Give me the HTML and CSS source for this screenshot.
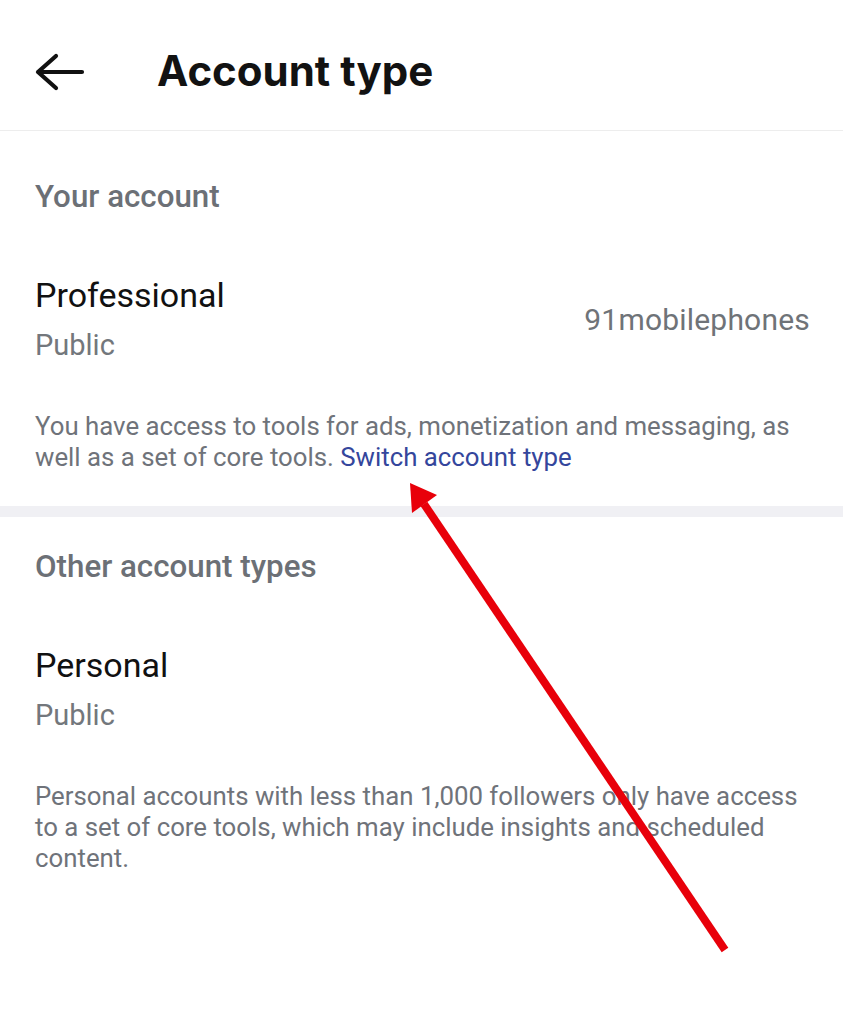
FILE: index.html
```html
<!DOCTYPE html>
<html>
<head>
<meta charset="utf-8">
<link rel="stylesheet" href="styles.css">
</head>
<body>
<div class="page">
  <header class="topbar">
    <svg class="back" width="50" height="40" viewBox="0 0 50 40">
      <path d="M47 20 H3 M21 4 L3 20 L21 36" fill="none" stroke="#111" stroke-width="4.2" stroke-linecap="round" stroke-linejoin="round"/>
    </svg>
    <h1 class="title">Account type</h1>
  </header>

  <section class="section">
    <div class="section-label">Your account</div>
    <div class="row">
      <div class="row-text">
        <div class="row-title">Professional</div>
        <div class="row-sub">Public</div>
      </div>
      <div class="username">91mobilephones</div>
    </div>
    <p class="desc">You have access to tools for ads, monetization and messaging, as well as a set of core tools. <span class="link">Switch account type</span></p>
  </section>

  <div class="gap"></div>

  <section class="section second">
    <div class="section-label">Other account types</div>
    <div class="row">
      <div class="row-text">
        <div class="row-title">Personal</div>
        <div class="row-sub">Public</div>
      </div>
    </div>
    <p class="desc">Personal accounts with less than 1,000 followers only have access to a set of core tools, which may include insights and scheduled content.</p>
  </section>

  <svg class="annot" width="843" height="1024" viewBox="0 0 843 1024">
    <line x1="424" y1="504" x2="725" y2="950" stroke="#e8000a" stroke-width="8" stroke-linecap="butt"/>
    <polygon points="410,483 412,513 437,495" fill="#e8000a"/>
  </svg>
</div>
</body>
</html>
```

FILE: styles.css
```css
html, body {
  margin: 0;
  padding: 0;
  background: #fff;
}
.page {
  position: relative;
  width: 843px;
  height: 1024px;
  overflow: hidden;
  font-family: Roboto, "Liberation Sans", sans-serif;
}
.topbar {
  height: 131px;
  display: flex;
  align-items: center;
  padding: 11px 0 0 35px;
  border-bottom: 1px solid #ededed;
  box-sizing: border-box;
}
.back {
  display: block;
  margin-top: 3px;
  flex: none;
}
.title {
  margin: 0 0 0 72px;
  font-family: Inter, "Liberation Sans", sans-serif;
  font-weight: 700;
  font-size: 42px;
  line-height: 51px;
  color: #121212;
}
.section {
  padding: 0 33px 0 35px;
}
.section-label {
  padding-top: 48px;
  font-size: 31.3px;
  font-weight: 500;
  color: #6c7076;
  line-height: 36px;
}
.second .section-label {
  padding-top: 32px;
}
.row {
  display: flex;
  align-items: center;
  justify-content: space-between;
  margin-top: 60px;
}
.row-title {
  font-size: 34px;
  color: #111;
  line-height: 40px;
}
.row-sub {
  font-size: 29px;
  color: #73777c;
  line-height: 34px;
  margin-top: 13px;
}
.username {
  font-size: 30px;
  letter-spacing: 0.2px;
  color: #6f7378;
  margin-top: 2px;
}
.desc {
  margin: 49px 0 0 0;
  font-size: 25.8px;
  line-height: 31px;
  color: #6f737a;
}
.link {
  color: #34469c;
}
.gap {
  margin-top: 33px;
  height: 11px;
  background: #f0f0f4;
}
.annot {
  position: absolute;
  left: 0;
  top: 0;
  pointer-events: none;
}
```
